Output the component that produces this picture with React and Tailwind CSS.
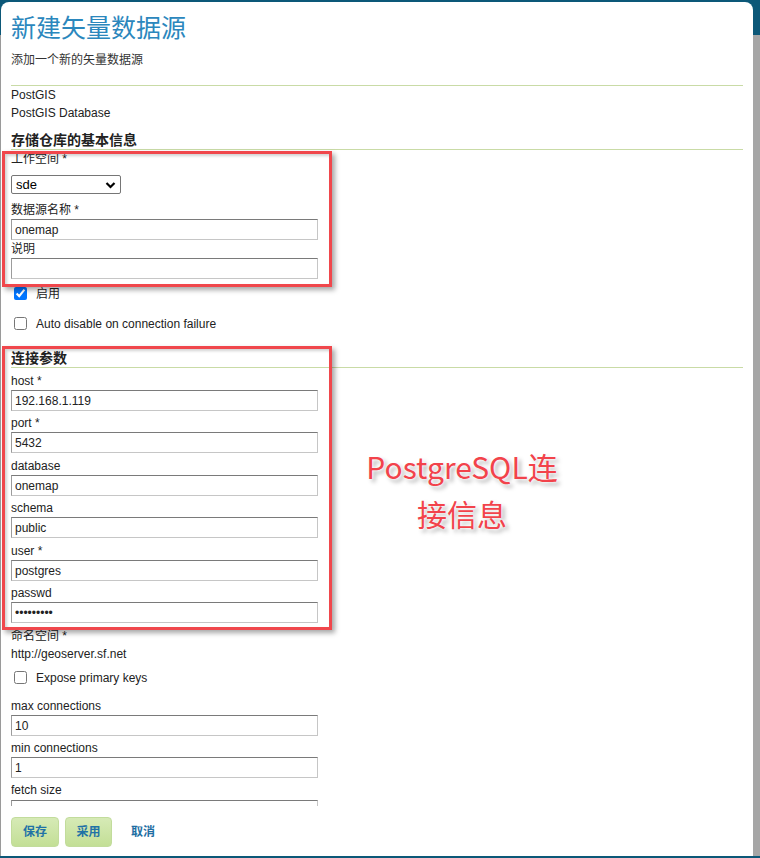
import React from 'react';

const connFields = [
  { label: 'host *', value: '192.168.1.119', mt: 'mt-[5px]' },
  { label: 'port *', value: '5432', mt: 'mt-[4px]' },
  { label: 'database', value: 'onemap', mt: 'mt-[5px]' },
  { label: 'schema', value: 'public', mt: 'mt-[4px]' },
  { label: 'user *', value: 'postgres', mt: 'mt-[5px]' },
  { label: 'passwd', value: '123456789', mt: 'mt-[4px]', password: true },
];

const TextBox = ({ value, password, className = '' }) => (
  <input
    readOnly
    type={password ? 'password' : 'text'}
    defaultValue={value}
    className={`block w-[307px] h-[21px] pl-[3px] border border-[#c6c6c6] border-t-[#7a7a7a] border-l-[#9c9c9c] bg-white text-[12px] text-[#222] font-['Liberation_Sans',Arial,sans-serif] outline-none ${className}`}
  />
);

const Check = ({ checked, label, className = '' }) => (
  <div className={`flex items-center h-[13px] ${className}`}>
    <input
      type="checkbox"
      defaultChecked={checked}
      className="m-0 ml-[3px] w-[13px] h-[13px] accent-[#0075ff]"
    />
    <span className="ml-[9px] text-[12px] leading-[16px] text-[#222]">{label}</span>
  </div>
);

const Heading = ({ children, className = '' }) => (
  <div className={`text-[14px] font-bold leading-[18px] text-[#222] border-b border-[#c9dba6] ${className}`}>
    {children}
  </div>
);

export default function App() {
  return (
    <div className="relative flex w-[760px] h-[858px] pt-[2px] pb-[2px] bg-[#0c5878] font-['Liberation_Sans','Noto_Sans_CJK_SC',sans-serif] overflow-hidden">
      <div className="flex flex-col w-px">
        <div className="h-[33px]" />
        <div className="flex-1 bg-[#9a9a9a]" />
      </div>

      <div className="flex-1 flex flex-col bg-white rounded-t-[8px] pl-[10px] pr-[10px]">
        <div className="h-[804px] overflow-hidden pt-[9px]">
          <h1 className="text-[25px] leading-[30px] text-[#2b87bd] font-['Noto_Sans_CJK_SC',sans-serif]">新建矢量数据源</h1>
          <p className="mt-[11px] text-[12px] leading-[16px] text-[#333]">添加一个新的矢量数据源</p>
          <div className="mt-[17px] h-px bg-[#c9dba6]" />
          <div className="text-[12px] leading-[18px] text-[#222]">
            <div>PostGIS</div>
            <div>PostGIS Database</div>
          </div>

          <Heading className="mt-[9px]">存储仓库的基本信息</Heading>
          <div className="mt-px text-[12px] leading-[16px] text-[#222]">工作空间 *</div>
          <div className="mt-[8px] flex items-center justify-between w-[110px] h-[19px] pl-[4px] pr-[4px] border border-[#767676] rounded-[2px] text-[13px] text-black font-['Liberation_Sans',Arial,sans-serif]">
            <span>sde</span>
            <svg width="11" height="8" viewBox="0 0 11 8" fill="none">
              <path d="M1.5 2 L5.5 6 L9.5 2" stroke="#000" strokeWidth="2.2" />
            </svg>
          </div>
          <div className="mt-[8px] text-[12px] leading-[16px] text-[#222]">数据源名称 *</div>
          <TextBox value="onemap" className="mt-px" />
          <div className="mt-px text-[12px] leading-[16px] text-[#222]">说明</div>
          <TextBox value="" className="mt-px" />

          <Check checked label="启用" className="mt-[8px]" />
          <Check label="Auto disable on connection failure" className="mt-[17px]" />

          <Heading className="mt-[19px]">连接参数</Heading>
          {connFields.map(f => (
            <div key={f.label} className={f.mt}>
              <div className="text-[12px] leading-[17px] text-[#222]">{f.label}</div>
              <TextBox value={f.value} password={f.password} />
            </div>
          ))}

          <div className="mt-[5px] text-[12px] leading-[16px] text-[#222]">命名空间 *</div>
          <div className="mt-[2px] text-[12px] leading-[16px] text-[#222]">http://geoserver.sf.net</div>
          <Check label="Expose primary keys" className="mt-[9px]" />

          <div className="mt-[14px] text-[12px] leading-[16px] text-[#222]">max connections</div>
          <TextBox value="10" className="mt-px" />
          <div className="mt-[4px] text-[12px] leading-[16px] text-[#222]">min connections</div>
          <TextBox value="1" className="mt-px" />
          <div className="mt-[4px] text-[12px] leading-[16px] text-[#222]">fetch size</div>
          <TextBox value="1000" className="mt-[2px]" />
        </div>

        <div className="mt-[11px] flex items-center gap-[6px]">
          <button className="w-[48px] h-[30px] rounded-[4px] border border-[#c2dc9c] bg-gradient-to-b from-[#d6eab6] to-[#c3df96] text-[12px] font-bold text-[#1f72a6]">保存</button>
          <button className="w-[47px] h-[30px] rounded-[4px] border border-[#c2dc9c] bg-gradient-to-b from-[#d6eab6] to-[#c3df96] text-[12px] font-bold text-[#1f72a6]">采用</button>
          <a className="ml-[13px] text-[12px] font-bold text-[#1f6fa3]">取消</a>
        </div>
      </div>

      <div className="flex flex-col w-[7px]">
        <div className="h-[33px]" />
        <div className="flex-1 bg-[#a6a6a6]" />
      </div>

      <div className="absolute left-[2px] top-[151px] w-[330px] h-[136px] border-[3px] border-[#f0474c] shadow-[3px_3px_5px_rgba(0,0,0,0.35),inset_2px_2px_3px_rgba(0,0,0,0.18)] pointer-events-none" />
      <div className="absolute left-[2px] top-[346px] w-[330px] h-[284px] border-[3px] border-[#f0474c] shadow-[3px_3px_5px_rgba(0,0,0,0.35),inset_2px_2px_3px_rgba(0,0,0,0.18)] pointer-events-none" />

      <div className="absolute left-[362px] top-[443px] w-[200px] text-center text-[30px] leading-[47px] text-[#f2434b] font-['Noto_Sans_CJK_SC',sans-serif] [text-shadow:0_0_2px_#fff,0_0_4px_#fff,3px_3px_4px_rgba(0,0,0,0.35)]">
        PostgreSQL连<br />接信息
      </div>
    </div>
  );
}
